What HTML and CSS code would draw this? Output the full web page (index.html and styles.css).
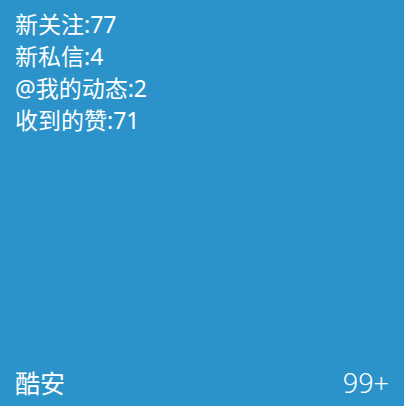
FILE: index.html
```html
<!DOCTYPE html>
<html lang="zh">
<head>
<meta charset="utf-8">
<link rel="stylesheet" href="styles.css">
</head>
<body>
<div class="tile">
  <ul class="stats">
    <li>新关注:77</li>
    <li>新私信:4</li>
    <li>@我的动态:2</li>
    <li>收到的赞:71</li>
  </ul>
  <div class="footer">
    <span class="name">酷安</span>
    <span class="badge">99+</span>
  </div>
</div>
</body>
</html>
```
FILE: styles.css
```css
html, body {
  margin: 0;
  padding: 0;
  background: #2b93c9;
}
.tile {
  box-sizing: border-box;
  width: 404px;
  height: 406px;
  padding: 8px 15px 6px 15px;
  display: flex;
  flex-direction: column;
  justify-content: space-between;
  background: #2b93c9;
  color: #ffffff;
  font-family: "Noto Sans", "Noto Sans CJK SC", sans-serif;
}
.stats {
  list-style: none;
  margin: 0;
  padding: 0;
  font-size: 23px;
  line-height: 32px;
}
.footer {
  display: flex;
  justify-content: space-between;
  align-items: baseline;
  font-size: 25px;
  line-height: 34px;
}
.badge {
  font-size: 27px;
  font-weight: 300;
}
```
